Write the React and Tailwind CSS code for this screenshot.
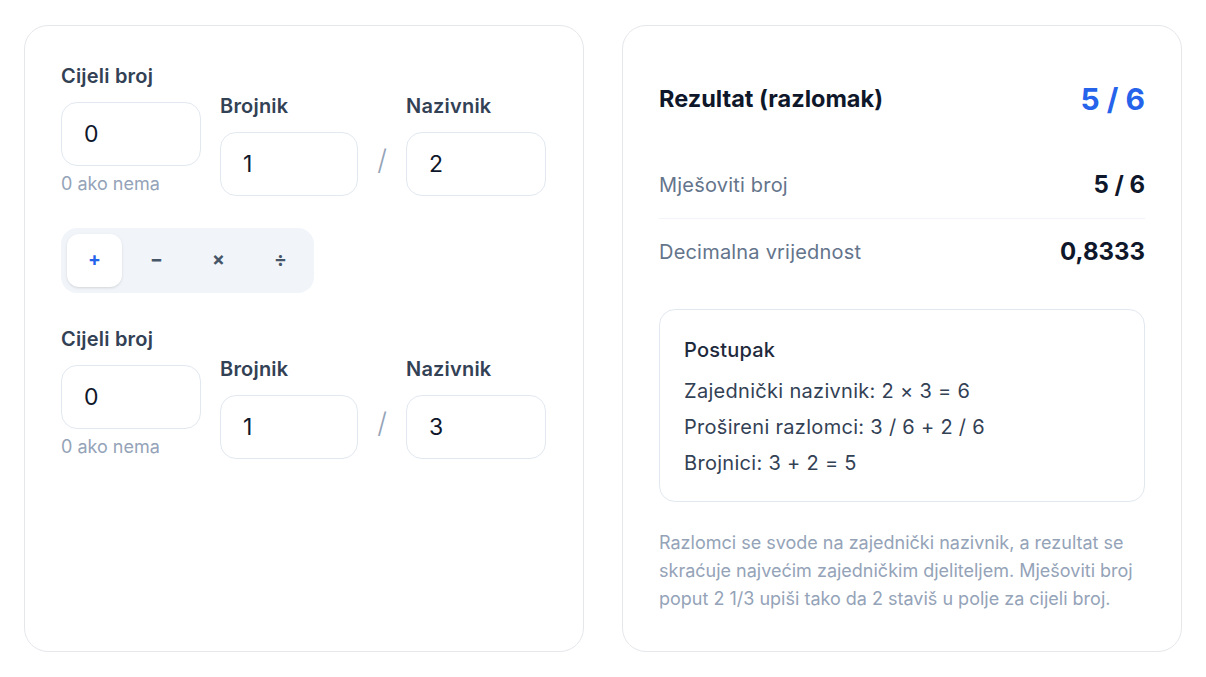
import React from "react";

function Field({ label, value, hint, w }) {
  return (
    <div className={`flex flex-col ${w}`}>
      <div className="mb-3 text-[20px] font-semibold leading-7 tracking-[0.01em] text-[#334155]">{label}</div>
      <div className="flex h-16 items-center rounded-2xl border border-[#e2e8f0] bg-white pl-[22px] font-['Inter',sans-serif] text-[23px] text-[#0f172a]">
        {value}
      </div>
      {hint && <div className="mt-1.5 text-[18px] leading-6 text-[#94a3b8]">{hint}</div>}
    </div>
  );
}

function FractionRow({ whole, num, den }) {
  return (
    <div className="flex items-end">
      <Field label="Cijeli broj" value={whole} hint="0 ako nema" w="w-[140px]" />
      <div className="ml-[19px]">
        <Field label="Brojnik" value={num} w="w-[138px]" />
      </div>
      <div className="flex h-16 w-[48px] items-center justify-center pb-2 text-[28px] font-light text-[#94a3b8]">/</div>
      <Field label="Nazivnik" value={den} w="w-[140px]" />
    </div>
  );
}

export default function App() {
  const ops = ["+", "−", "×", "÷"];
  return (
    <div className="min-h-[677px] bg-white px-6 pt-[25px] font-['Inter',sans-serif]">
      <div className="grid grid-cols-2 gap-[38px]">
        <div className="h-[627px] rounded-3xl border border-[#e5e7eb] bg-white p-9">
          <FractionRow whole="0" num="1" den="2" />
          <div className="mt-8 flex w-fit gap-[7px] rounded-2xl bg-[#f1f5f9] p-1.5">
            {ops.map((o, i) => (
              <div
                key={o}
                className={`flex h-[53px] w-[55px] items-center justify-center rounded-xl text-[19px] font-bold ${
                  i === 0 ? "bg-white text-[#2563eb] shadow-sm" : "text-[#475569]"
                }`}
              >
                {o}
              </div>
            ))}
          </div>
          <div className="mt-8">
            <FractionRow whole="0" num="1" den="3" />
          </div>
        </div>

        <div className="rounded-3xl border border-[#e5e7eb] bg-white px-9 pt-9 pb-9">
          <div className="mt-[19px] flex h-9 items-center justify-between">
            <div className="text-[23.5px] font-bold text-[#0f172a]">Rezultat (razlomak)</div>
            <div className="text-[30px] font-bold text-[#2563eb]">5 / 6</div>
          </div>
          <div className="mt-[35px]">
            <div className="flex items-center justify-between border-b border-[#f1f5f9] py-[17px] leading-8">
              <span className="text-[20px] tracking-[0.01em] text-[#64748b]">Mješoviti broj</span>
              <span className="text-[24px] font-bold text-[#0f172a]">5 / 6</span>
            </div>
            <div className="flex items-center justify-between py-[17px] leading-8">
              <span className="text-[20px] tracking-[0.01em] text-[#64748b]">Decimalna vrijednost</span>
              <span className="text-[24px] font-bold text-[#0f172a]">0,8333</span>
            </div>
          </div>
          <div className="mt-6 rounded-2xl border border-[#e2e8f0] bg-white px-6 pt-[26px] pb-6">
            <div className="text-[20px] font-medium leading-7 tracking-[0.01em] text-[#1e293b]">Postupak</div>
            <div className="mt-[13px] space-y-2 text-[20px] leading-7 tracking-[0.015em] text-[#334155]">
              <div>Zajednički nazivnik: 2 × 3 = 6</div>
              <div>Prošireni razlomci: 3 / 6 + 2 / 6</div>
              <div>Brojnici: 3 + 2 = 5</div>
            </div>
          </div>
          <p className="mt-[27px] text-[18px] leading-7 text-[#94a3b8]">
            Razlomci se svode na zajednički nazivnik, a rezultat se skraćuje najvećim zajedničkim djeliteljem. Mješoviti broj poput 2 1/3 upiši tako da 2 staviš u polje za cijeli broj.
          </p>
        </div>
      </div>
    </div>
  );
}
